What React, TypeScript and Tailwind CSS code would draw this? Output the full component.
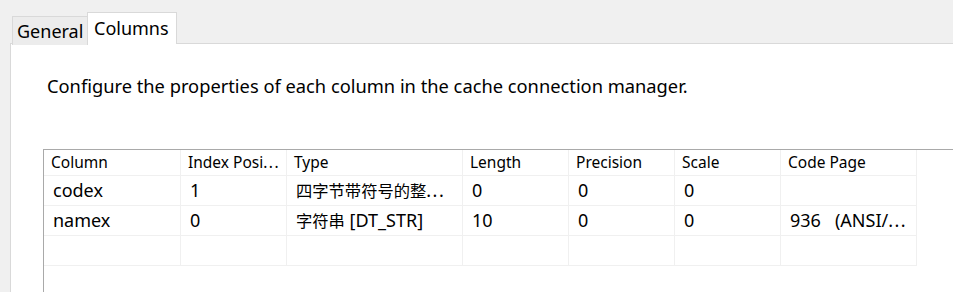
const cols = [
  { name: "Column", w: "w-[137px]" },
  { name: "Index Posi", w: "w-[106px]", cut: true },
  { name: "Type", w: "w-[176px]" },
  { name: "Length", w: "w-[106px]" },
  { name: "Precision", w: "w-[106px]" },
  { name: "Scale", w: "w-[106px]" },
  { name: "Code Page", w: "w-[136px]" },
];

// CJK glyphs sit a bit smaller than the latin text in the original
const Cjk = ({ children }: { children: string }) => (
  <span className="text-[16.3px]">{children}</span>
);

// the grid's ellipsis is drawn a little wider than three plain dots
const Dots = () => <span className="tracking-[1.5px]">...</span>;

const rows: React.ReactNode[][] = [
  ["codex", "1", <><Cjk>四字节带符号的整</Cjk><Dots /></>, "0", "0", "0", ""],
  ["namex", "0", <><Cjk>字符串</Cjk> [DT_STR]</>, "10", "0", "0", <>936{"\u00a0\u00a0\u00a0"}(ANSI/<Dots /></>],
  ["", "", "", "", "", "", ""],
];

export default function App() {
  return (
    <div
      className="w-[953px] h-[292px] overflow-hidden bg-[#f0f0f0] text-black pl-[10px] pt-[12px]"
      style={{ fontFamily: '"Noto Sans", "Noto Sans CJK SC", sans-serif' }}
    >
      {/* tabs */}
      <div className="flex items-end h-[32px] pl-[2px]">
        <div className="h-[29px] w-[76px] border border-b-0 border-[#d9d9d9] bg-[#ececec] text-[18px] leading-[28px] pl-[4px] -mb-px">
          General
        </div>
        <div className="relative z-10 h-[32px] w-[90px] border border-b-0 border-[#d9d9d9] bg-white text-[18px] leading-[31px] pl-[6px] -ml-px">
          Columns
        </div>
      </div>

      {/* tab page */}
      <div className="h-[260px] border-l border-t border-[#d9d9d9] bg-white -mt-px">
        <p className="pl-[36px] pt-[30px] text-[18.3px] leading-[24px]">
          Configure the properties of each column in the cache connection manager.
        </p>

        {/* grid */}
        <div className="ml-[32px] mt-[51px] h-[200px] border-l border-t border-[#a9a9a9] bg-white">
          <div className="flex h-[26px]">
            {cols.map((c) => (
              <div
                key={c.name}
                className={`${c.w} shrink-0 border-r border-b border-[#f0f0f0] pl-[7px] text-[15.5px] leading-[25px] whitespace-nowrap overflow-hidden`}
              >
                {c.name}
                {c.cut && <Dots />}
              </div>
            ))}
          </div>
          {rows.map((r, i) => (
            <div key={i} className="flex h-[30px]">
              {r.map((v, j) => (
                <div
                  key={j}
                  className={`${cols[j].w} shrink-0 border-r border-b border-[#f0f0f0] pl-[9px] text-[18px] leading-[29px] whitespace-nowrap overflow-hidden`}
                >
                  {v}
                </div>
              ))}
            </div>
          ))}
        </div>
      </div>
    </div>
  );
}
